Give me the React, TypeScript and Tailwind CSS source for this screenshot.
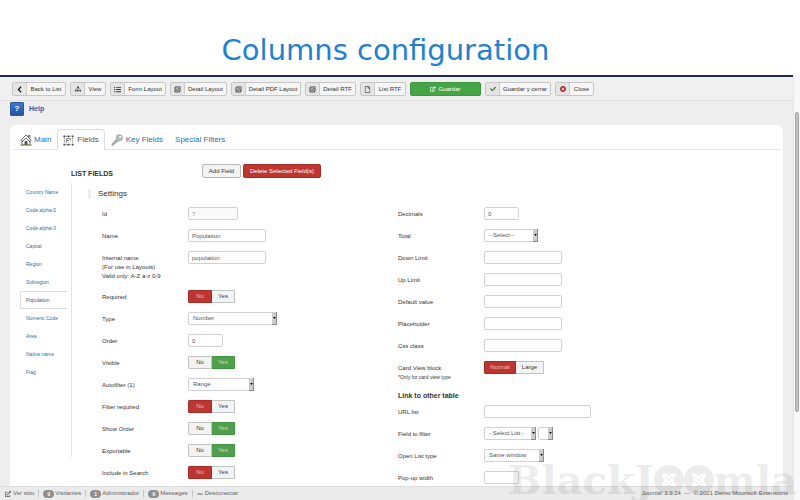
import React from "react";
import {
  FaCheck,
  FaChevronLeft,
  FaExternalLinkAlt,
  FaJoomla,
  FaListUl,
  FaMinus,
  FaRegEdit,
  FaRegFile,
  FaSitemap,
  FaTimesCircle,
} from "react-icons/fa";

type Tool = {
  label: string;
  icon: React.ReactNode;
  width: string;
};

const DetailIcon = () => (
  <svg viewBox="0 0 16 16" className="size-[7px]" fill="none" stroke="#444" strokeWidth="1.8">
    <path d="M4 3H2v11h11v-3" />
    <rect x="4.5" y="2" width="9.5" height="9" />
    <path d="M7 9l4-4M8 4.5h3.5V8" />
  </svg>
);

const tools: Tool[] = [
  { label: "Back to List", icon: <FaChevronLeft className="size-[7px] text-black" />, width: "w-[54px]" },
  { label: "View", icon: <FaSitemap className="size-[6px]" />, width: "w-[36px]" },
  { label: "Form Layout", icon: <FaListUl className="size-[7px]" />, width: "w-[56px]" },
  { label: "Detail Layout", icon: <DetailIcon />, width: "w-[57px]" },
  { label: "Detail PDF Layout", icon: <DetailIcon />, width: "w-[70px]" },
  { label: "Detail RTF", icon: <DetailIcon />, width: "w-[51px]" },
  { label: "List RTF", icon: <FaRegFile className="size-[7px] text-[#555]" />, width: "w-[46px]" },
];

const endTools: Tool[] = [
  { label: "Guardar y cerrar", icon: <FaCheck className="size-[6px] text-[#378137]" />, width: "w-[66px]" },
  { label: "Close", icon: <FaTimesCircle className="size-[6px] text-[#a51f18]" />, width: "w-[39px]" },
];

const fields = [
  "Country Name",
  "Code alpha-2",
  "Code alpha-3",
  "Capital",
  "Region",
  "Subregion",
  "Population",
  "Numeric Code",
  "Area",
  "Native name",
  "Flag",
];

const ToolButton = ({ label, icon, width }: Tool) => (
  <button
    type="button"
    className={`flex h-[14px] shrink-0 overflow-hidden rounded-xs border border-[#c6c6c6] bg-[#f6f6f6] ${width}`}
  >
    <span className="flex h-full w-[14px] shrink-0 items-center justify-center border-r border-[#cccccc] bg-[#e5e5e5]">
      {icon}
    </span>
    <span className="flex-1 text-center leading-3 whitespace-nowrap">{label}</span>
  </button>
);

const HouseIcon = () => (
  <svg viewBox="0 0 24 24" className="size-[12px]" fill="none" stroke="#444" strokeWidth="1.6">
    <path d="M1 13L12 2l11 11" />
    <path d="M4 16l8-8 8 8" />
    <path d="M4 12v10h16V12M17 6V3h3v6" />
    <path d="M10 22v-7h4v7" fill="#555" />
    <path d="M1 22h7M16 22h7" stroke="#8ba05c" strokeWidth="3" />
  </svg>
);

const FieldsIcon = () => (
  <svg viewBox="0 0 24 24" className="size-[11px]" fill="none" stroke="#555" strokeWidth="1.6">
    <path d="M6 3h12M6 21h12M3 6v12M21 6v12" strokeDasharray="2.5 1.5" />
    <g fill="#444" stroke="none">
      <path d="M1 1h4v4H1zM19 1h4v4h-4zM1 19h4v4H1zM19 19h4v4h-4zM10 1h4v4h-4zM10 19h4v4h-4z" />
    </g>
    <path d="M8 17V8h8v3M8 12h5" />
  </svg>
);

const KeyIcon = () => (
  <svg viewBox="0 0 24 24" className="size-[12px]">
    <path d="M12.5 8.5L2 19l-.5 4H5l1-2.5 2.5-.5.5-2.5 2.5-.5 4-4z" fill="#a9b0ac" stroke="#858d89" strokeWidth="0.8" />
    <circle cx="16.5" cy="7.5" r="6.5" fill="#b5bbb8" stroke="#8b938f" strokeWidth="0.8" />
    <circle cx="18.5" cy="5.5" r="2" fill="#fff" />
  </svg>
);

const Row = ({
  id,
  label,
  children,
}: {
  id: string;
  label: React.ReactNode;
  children: React.ReactNode;
}) => (
  <div className="flex min-h-[22px] items-start">
    <label htmlFor={id} className="w-[86px] shrink-0 pt-[7px] pb-[5px] leading-[9px]">
      {label}
    </label>
    <div className="flex gap-[2px] pt-1">{children}</div>
  </div>
);

const TextBox = ({
  id,
  width = "w-[78px]",
  value = "",
  disabled = false,
}: {
  id: string;
  width?: string;
  value?: string;
  disabled?: boolean;
}) => (
  <input
    id={id}
    type="text"
    defaultValue={value}
    disabled={disabled}
    className={`h-[13px] rounded-xs border border-[#d2d2d2] bg-white px-[3px] leading-[11px] text-[#555] disabled:bg-[#fafafa] disabled:text-[#999] ${width}`}
  />
);

const SelectBox = ({
  id,
  width,
  value = "",
  name,
}: {
  id: string;
  width: string;
  value?: string;
  name?: string;
}) => (
  <div className={`relative h-[13px] ${width}`}>
    <select
      id={id}
      aria-label={name}
      className="block h-full w-full appearance-none rounded-xs border border-[#d2d2d2] bg-white pr-1 pl-1 leading-[11px] text-[#555]"
    >
      <option>{value}</option>
    </select>
    <span className="pointer-events-none absolute inset-y-0 right-0 flex w-[5px] items-center justify-center border-r border-b border-[#8a8a8a] bg-[#cccccc]">
      <svg viewBox="0 0 4 3" className="h-[2px] w-[3px]">
        <path d="M0 0h4L2 3z" fill="#000" />
      </svg>
    </span>
  </div>
);

const Toggle = ({
  id,
  on = false,
  options = ["No", "Yes"],
  widths = ["w-[24px]", "w-[23px]"],
}: {
  id: string;
  on?: boolean;
  options?: string[];
  widths?: string[];
}) => (
  <div className="relative flex h-[13px] overflow-hidden rounded-[1px] text-center leading-[11px] text-[#333]">
    <label className={widths[0]}>
      <input id={id} type="radio" name={id} defaultChecked={!on} className="peer sr-only" />
      <span className="block h-full rounded-l-[1px] border border-[#c2c2c2] bg-[#f3f3f3] peer-checked:border-[#a92b25] peer-checked:bg-[#bd362f] peer-checked:text-[#e8c0be]">
        {options[0]}
      </span>
    </label>
    <label className={widths[1]}>
      <input type="radio" name={id} defaultChecked={on} className="peer sr-only" />
      <span className="block h-full rounded-r-[1px] border border-l-0 border-[#c2c2c2] bg-[#f3f3f3] peer-checked:border-[#409740] peer-checked:bg-[#4f9f4f] peer-checked:text-[#c6e2c6]">
        {options[1]}
      </span>
    </label>
  </div>
);

const Badge = ({ count, label }: { count: number; label: string }) => (
  <span className="flex items-center gap-px">
    <span className="h-2 w-[11px] rounded-full bg-[#8f8f8f] text-center text-[5px] leading-2 font-bold text-white">
      {count}
    </span>
    {label}
  </span>
);

const Divider = () => <span className="h-[7px] w-px bg-[#c4c4c4]" />;

const App = () => {
  return (
    <div className="relative flex h-screen flex-col overflow-hidden bg-white font-['Liberation_Sans',Arial,sans-serif] text-[6px] text-[#333]">
      <h1 className="h-[75px] shrink-0 pt-[30px] pr-[29px] text-center font-['DejaVu_Sans',sans-serif] text-[29px] leading-10 text-[#2180d0]">
        Columns configuration
      </h1>

      <div className="flex min-h-0 flex-1">
        <div className="flex min-w-0 flex-1 flex-col border-t-2 border-[#1c2d4c] bg-[#eeeeee]">
          {/* Toolbar */}
          <div className="flex shrink-0 gap-1 border-b border-[#e3e3e3] bg-[#f0f0f0] pt-[5px] pb-1 pl-3">
            {tools.map((tool) => (
              <ToolButton key={tool.label} {...tool} />
            ))}
            <button
              type="button"
              className="flex h-[14px] w-[71px] shrink-0 items-center justify-center gap-[2px] rounded-xs border border-[#3d953d] bg-[#46a546] text-white"
            >
              <FaRegEdit className="size-[6px]" />
              Guardar
            </button>
            {endTools.map((tool) => (
              <ToolButton key={tool.label} {...tool} />
            ))}
          </div>

          {/* Help */}
          <div className="h-6 shrink-0 pt-px pl-[10px]">
            <a href="#help" className="flex items-center gap-[5px] text-[7px] font-bold text-[#2d60b0]">
              <span className="flex size-[14px] items-center justify-center rounded-[1px] border border-[#2a57a0] bg-linear-to-b from-[#3f78c8] to-[#2453a4] text-[8px] leading-3 text-white">
                ?
              </span>
              Help
            </a>
          </div>

          <main className="mr-[10px] ml-[10px] min-h-0 flex-1 overflow-hidden rounded-t-md bg-white pt-1">
            <nav className="mx-[3px] flex h-[21px] border-b border-[#e5e5e5] text-[8px] leading-5 text-[#2f6fab]">
              <a href="#main" className="flex items-center gap-[2px] pt-px pr-[6px] pl-[7px]">
                <HouseIcon />
                Main
              </a>
              <a
                href="#fields"
                className="flex h-[21px] items-center gap-[3px] rounded-t-sm border border-b-0 border-[#dddddd] bg-white px-[5px] text-[#555]"
              >
                <FieldsIcon />
                Fields
              </a>
              <a href="#key-fields" className="flex items-center gap-[3px] px-[6px] pt-px">
                <KeyIcon />
                Key Fields
              </a>
              <a href="#special-filters" className="flex items-center px-[6px] pt-px">
                Special Filters
              </a>
            </nav>

            <div className="flex items-end pt-[14px] pl-[61px]">
              <h2 className="w-[131px] text-[7px] leading-2 font-bold">LIST FIELDS</h2>
              <button
                type="button"
                className="h-[14px] w-[39px] rounded-xs border border-[#bbbbbb] bg-[#f3f3f3] leading-3"
              >
                Add Field
              </button>
              <button
                type="button"
                className="ml-[2px] h-[14px] w-[78px] rounded-xs border border-[#a92b25] bg-[#bd362f] leading-3 text-white"
              >
                Delete Selected Field(s)
              </button>
            </div>

            <div className="flex items-start pt-[5px] pl-[10px]">
              <ul className="min-h-[274px] w-[52px] shrink-0 border-r border-[#e2e2e2] pr-1 text-[5px] leading-4 text-[#2f6fab]">
                {fields.map((field) => (
                  <li key={field}>
                    <a
                      href="#field"
                      className={
                        field === "Population"
                          ? "block rounded-l-xs border border-r-0 border-[#dddddd] pl-[5px] whitespace-nowrap text-[#555]"
                          : "block border border-r-0 border-transparent pl-[5px] whitespace-nowrap"
                      }
                    >
                      {field}
                    </a>
                  </li>
                ))}
              </ul>

              <form className="min-w-0 flex-1 pt-[6px] pl-4">
                <h3 className="mb-1 border-l-3 border-[#eeeeee] pl-[7px] text-[8px] leading-[10px]">
                  Settings
                </h3>
                <div className="grid grid-cols-2 pr-[89px] pl-[14px]">
                  <div>
                    <Row id="field-id" label="Id">
                      <TextBox id="field-id" width="w-[50px]" value="7" disabled />
                    </Row>
                    <Row id="name" label="Name">
                      <TextBox id="name" value="Population" />
                    </Row>
                    <Row
                      id="internal-name"
                      label={
                        <>
                          Internal name
                          <br />
                          (For use in Layouts)
                          <br />
                          Valid only: A-Z a-z 0-9
                        </>
                      }
                    >
                      <TextBox id="internal-name" value="population" />
                    </Row>
                    <Row id="required" label="Required">
                      <Toggle id="required" />
                    </Row>
                    <Row id="type" label="Type">
                      <SelectBox id="type" width="w-[89px]" value="Number" />
                    </Row>
                    <Row id="order" label="Order">
                      <TextBox id="order" width="w-[35px]" value="0" />
                    </Row>
                    <Row id="visible" label="Visible">
                      <Toggle id="visible" on />
                    </Row>
                    <Row id="autofilter" label="Autofilter (1)">
                      <SelectBox id="autofilter" width="w-[66px]" value="Range" />
                    </Row>
                    <Row id="filter-required" label="Filter required">
                      <Toggle id="filter-required" />
                    </Row>
                    <Row id="show-order" label="Show Order">
                      <Toggle id="show-order" on />
                    </Row>
                    <Row id="exportable" label="Exportable">
                      <Toggle id="exportable" on />
                    </Row>
                    <Row id="include-in-search" label="Include in Search">
                      <Toggle id="include-in-search" />
                    </Row>
                  </div>

                  <div>
                    <Row id="decimals" label="Decimals">
                      <TextBox id="decimals" width="w-[35px]" value="0" />
                    </Row>
                    <Row id="total" label="Total">
                      <SelectBox id="total" width="w-[54px]" value="--Select--" />
                    </Row>
                    <Row id="down-limit" label="Down Limit">
                      <TextBox id="down-limit" />
                    </Row>
                    <Row id="up-limit" label="Up Limit">
                      <TextBox id="up-limit" />
                    </Row>
                    <Row id="default-value" label="Default value">
                      <TextBox id="default-value" />
                    </Row>
                    <Row id="placeholder" label="Placeholder">
                      <TextBox id="placeholder" />
                    </Row>
                    <Row id="css-class" label="Css class">
                      <TextBox id="css-class" />
                    </Row>
                    <Row
                      id="card-view"
                      label={
                        <>
                          Card View block
                          <br />
                          <span className="text-[5px]">*Only for card view type</span>
                        </>
                      }
                    >
                      <Toggle
                        id="card-view"
                        options={["Normal", "Large"]}
                        widths={["w-[32px]", "w-[28px]"]}
                      />
                    </Row>
                    <h4 className="pt-1 text-[7px] leading-[10px] font-bold">
                      Link to other table
                    </h4>
                    <Row id="url-list" label="URL list">
                      <TextBox id="url-list" width="w-[107px]" />
                    </Row>
                    <Row id="field-to-filter" label="Field to filter">
                      <SelectBox id="field-to-filter" width="w-[52px]" value="- Select List -" />
                      <SelectBox id="filter-column" width="w-[15px]" name="Column" />
                    </Row>
                    <Row id="open-list-type" label="Open List type">
                      <SelectBox id="open-list-type" width="w-[60px]" value="Same window" />
                    </Row>
                    <Row id="popup-width" label="Pop-up width">
                      <TextBox id="popup-width" width="w-[35px]" />
                    </Row>
                  </div>
                </div>
              </form>
            </div>
          </main>

          {/* Status bar */}
          <footer className="flex h-[14px] shrink-0 items-center gap-1 border-t border-[#dddddd] bg-[#ebebeb] pr-[5px] pl-[5px] text-[#626262]">
            <a href="#site" className="flex items-center gap-[2px]">
              <FaExternalLinkAlt className="size-[6px]" />
              Ver sitio
            </a>
            <Divider />
            <Badge count={0} label="Visitantes" />
            <Divider />
            <Badge count={1} label="Administrador" />
            <Divider />
            <Badge count={0} label="Messages" />
            <Divider />
            <a href="#logout" className="flex items-center gap-[2px]">
              <FaMinus className="size-[6px]" />
              Desconectar
            </a>
            <span className="ml-auto whitespace-pre">
              Joomla! 3.9.24{"  —  "}© 2021 Demo Moonsoft Extensions
            </span>
          </footer>
        </div>

        {/* Scrollbar */}
        <div className="w-[7px] shrink-0 border-l border-[#e6e6e6] bg-[#f8f8f8] pt-[37px] pl-px">
          <div className="h-[300px] w-[4px] rounded-full border border-[#a6a6a6] bg-[#c2c2c2]" />
        </div>
      </div>

      {/* Watermark */}
      <div className="pointer-events-none absolute right-[3px] bottom-0 flex items-center font-['DejaVu_Serif',serif] text-[40px] leading-10 font-bold text-black opacity-7">
        BlackJ
        {[0, 1].map((n) => (
          <span key={n} className="flex size-[30px] items-center justify-center rounded-full bg-black">
            <FaJoomla className="size-[16px] text-white" />
          </span>
        ))}
        mla
      </div>
    </div>
  );
};

export default App;
